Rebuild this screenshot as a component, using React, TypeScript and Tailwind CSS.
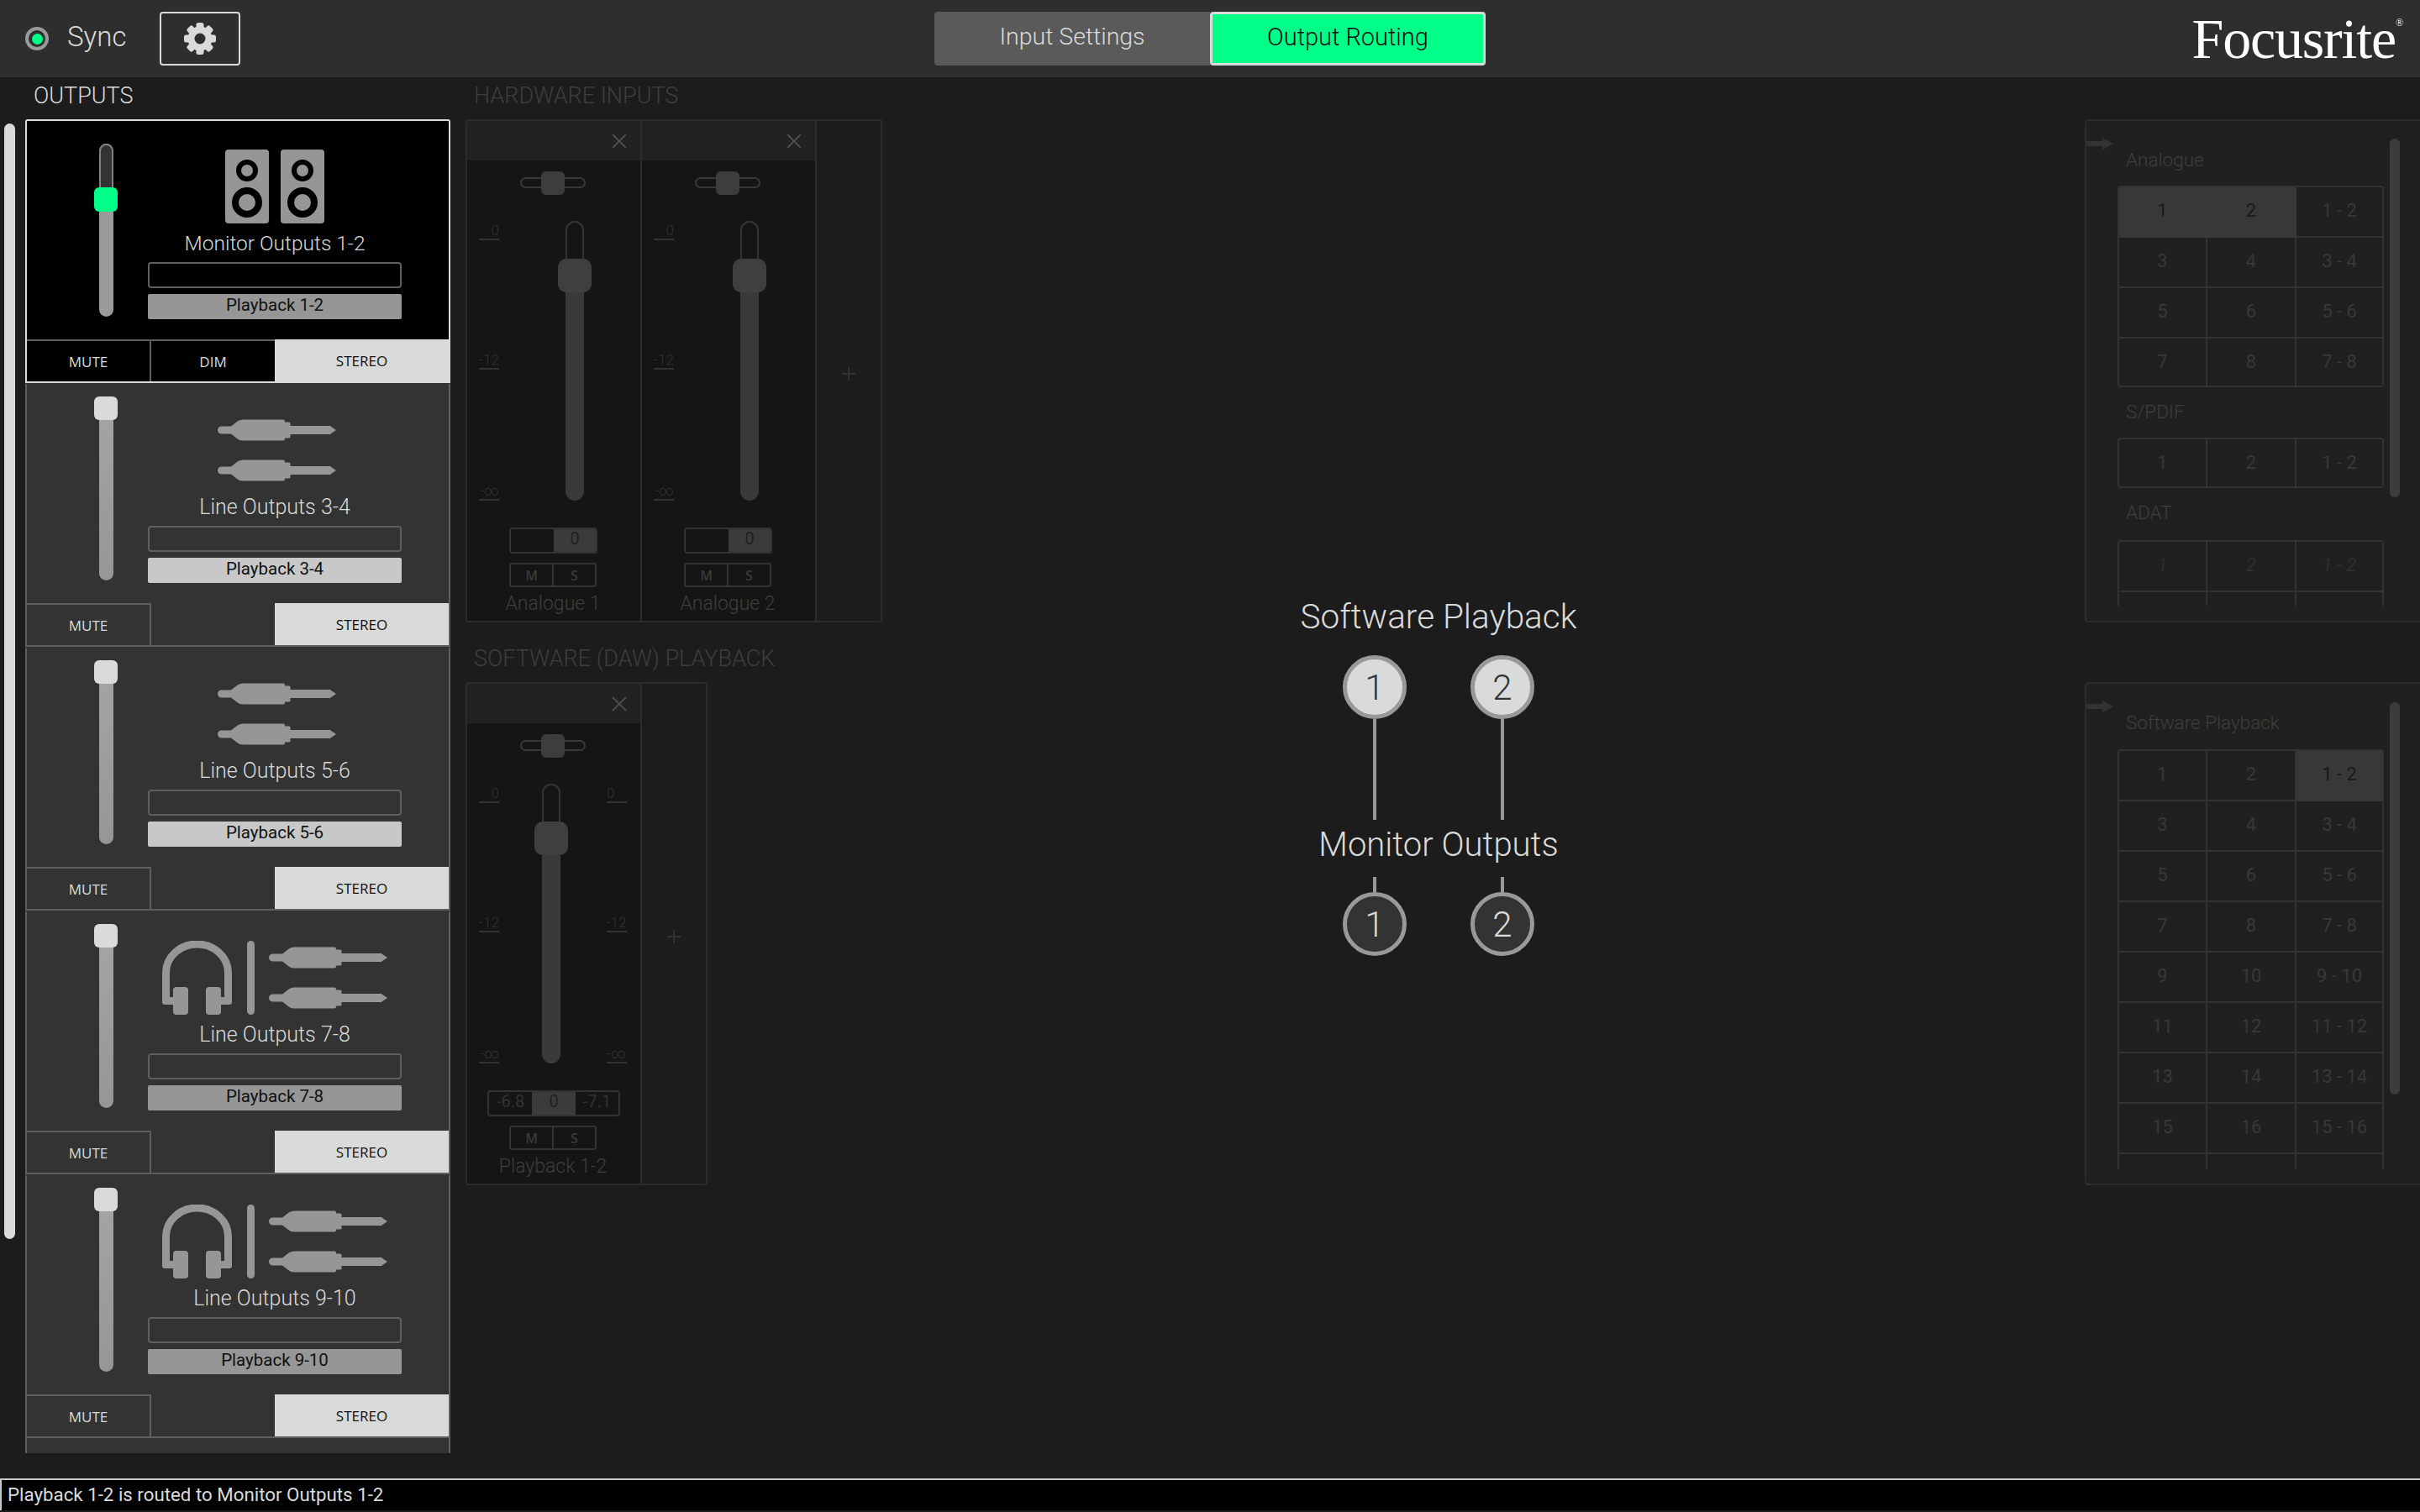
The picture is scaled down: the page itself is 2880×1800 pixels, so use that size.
import React from "react";

const GEAR_TEETH = [0, 45, 90, 135, 180, 225, 270, 315];

function Gear() {
  return (
    <svg width="38" height="40" viewBox="0 0 38 40">
      {GEAR_TEETH.map((a) => (
        <rect key={a} x="14.5" y="1" width="9" height="10" rx="2.5" fill="#d9dbda" transform={`rotate(${a} 19 20)`} />
      ))}
      <circle cx="19" cy="20" r="10.5" fill="none" stroke="#d9dbda" strokeWidth="8" />
    </svg>
  );
}

function Speaker() {
  return (
    <svg width="52" height="88" viewBox="0 0 52 88">
      <rect width="52" height="88" rx="4" fill="#969696" />
      <circle cx="26" cy="25" r="10" fill="#969696" stroke="#000" strokeWidth="6" />
      <circle cx="26" cy="63" r="14" fill="#969696" stroke="#000" strokeWidth="8" />
    </svg>
  );
}

function Jack() {
  return (
    <svg width="141" height="26" viewBox="0 0 141 26" className="block">
      <path
        fill="#969696"
        d="M4.5 8.5 H16 L23 3 Q26 0.5 30 0.5 H78 Q80 0.5 80 2.5 V3.5 H85 Q86.5 3.5 86.5 5 V8 H133 V7.5 L141 13 L133 18.5 V18 H86.5 V21 Q86.5 22.5 85 22.5 H80 V23.5 Q80 25.5 78 25.5 H30 Q26 25.5 23 23 L16 17.5 H4.5 A4.5 4.5 0 0 1 4.5 8.5 Z"
      />
    </svg>
  );
}

function Headphones() {
  return (
    <svg width="83" height="88" viewBox="0 0 83 88">
      <path d="M4.5 72 V38 A37 34 0 0 1 78.5 38 V72" fill="none" stroke="#969696" strokeWidth="9" />
      <rect x="0" y="67" width="16" height="9" rx="3" fill="#969696" />
      <rect x="67" y="67" width="16" height="9" rx="3" fill="#969696" />
      <rect x="13" y="55" width="18" height="33" rx="4" fill="#969696" />
      <rect x="52" y="55" width="18" height="33" rx="4" fill="#969696" />
    </svg>
  );
}

function Jacks() {
  return (
    <div className="flex flex-col gap-[22px]">
      <Jack />
      <Jack />
    </div>
  );
}

function OutputCard({ name, source, icon, bright, selected }: { name: string; source: string; icon: string; bright?: boolean; selected?: boolean }) {
  return (
    <div className={selected ? "h-[314px] bg-black border-t-2 border-x-2 border-[#d9dbda] rounded-t-[3px]" : "h-[314px] bg-[#333333] border-x-2 border-t-2 border-x-[#5f5f5f] border-t-[#333333]"}>
      <div className="flex h-[260px]">
        <div className="relative w-[28px] h-[206px] ml-[80px] mt-[27px]">
          {selected ? (
            <div className="w-[17px] h-full mx-auto rounded-full bg-[#9a9a9a] overflow-hidden">
              <div className="h-[56px] bg-[#333333] border-2 border-b-0 border-[#808080] rounded-t-full" />
            </div>
          ) : (
            <div className="w-[17px] h-full mx-auto rounded-full bg-gradient-to-b from-[#a4a4a4] to-[#969696]" />
          )}
          {selected ? (
            <div className="absolute left-0 top-[52px] w-[28px] h-[29px] rounded-[6px] bg-[#00ff88]" />
          ) : (
            <div className="absolute left-0 -top-[13px] w-[28px] h-[28px] rounded-[6px] bg-[#d9dbda]" />
          )}
        </div>
        <div className="flex flex-col w-[302px] ml-[36px]">
          <div className="h-[131px] pt-[25px] flex items-center justify-center shrink-0">
            {icon === "speakers" && (
              <div className="flex gap-[14px]">
                <Speaker />
                <Speaker />
              </div>
            )}
            {icon === "jacks" && (
              <div className="ml-[5px]">
                <Jacks />
              </div>
            )}
            {icon === "phones" && (
              <div className="flex items-center">
                <Headphones />
                <div className="w-[9px] h-[88px] rounded-full bg-[#969696] ml-[18px] mr-[17px]" />
                <Jacks />
              </div>
            )}
          </div>
          <div className={selected ? "h-[28px] leading-[30px] text-[24.5px] text-center text-[#d9dbda]" : "h-[28px] leading-[30px] text-[25px] text-center text-[#d9dbda]"}>{name}</div>
          <div className="h-[31px] mt-[9px] border-2 border-[#5f5f5f] rounded-[4px]" />
          <div className={bright ? "h-[30px] mt-[7px] rounded-[2px] bg-[#c8c8c8] text-[#111111] font-normal text-[20.5px] leading-[26px] text-center" : "h-[30px] mt-[7px] rounded-[2px] bg-[#969696] text-[#111111] font-normal text-[20.5px] leading-[26px] text-center"}>{source}</div>
        </div>
      </div>
      <div className={selected ? "flex h-[52px] font-['Open_Sans',sans-serif] font-medium text-[17px] text-[#d9dbda] border-b-2 border-[#d9dbda]" : "flex h-[52px] font-['Open_Sans',sans-serif] font-medium text-[17px] text-[#d9dbda] border-b-2 border-[#5f5f5f]"}>
        <div className="w-[148px] pt-[2px] border-t-2 border-r-2 border-[#5f5f5f] flex items-center justify-center">MUTE</div>
        <div className={selected ? "w-[147px] pt-[2px] border-t-2 border-[#5f5f5f] flex items-center justify-center" : "w-[147px] flex items-center justify-center"}>{selected ? "DIM" : ""}</div>
        <div className="flex-1 pt-[2px] bg-[#d9dbda] text-[#111111] flex items-center justify-center">STEREO</div>
      </div>
    </div>
  );
}

function Scale({ right }: { right?: boolean }) {
  return (
    <div className="w-[24px] flex flex-col">
      <div className={right ? "h-[23px] flex items-end justify-start border-b-2 border-[#333333] text-[17px] leading-[20px] text-[#333333]" : "h-[23px] flex items-end justify-end border-b-2 border-[#333333] text-[17px] leading-[20px] text-[#333333]"}>0</div>
      <div className={right ? "h-[154px] flex items-end justify-start border-b-2 border-[#333333] text-[17px] leading-[20px] text-[#333333]" : "h-[154px] flex items-end justify-end border-b-2 border-[#333333] text-[17px] leading-[20px] text-[#333333]"}>-12</div>
      <div className={right ? "h-[156px] flex items-end justify-start border-b-2 border-[#333333] text-[17px] leading-[20px] text-[#333333]" : "h-[156px] flex items-end justify-end border-b-2 border-[#333333] text-[17px] leading-[20px] text-[#333333]"}>-∞</div>
    </div>
  );
}

function Strip({ label, stereo }: { label: string; stereo?: boolean }) {
  return (
    <div className="w-[208px] h-full bg-[#151515] border-r-2 border-[#2c2c2c] shrink-0">
      <div className="h-[47px] bg-[#222222] flex items-center justify-end pr-[15px]">
        <svg width="20" height="20" viewBox="0 0 20 20">
          <path d="M2 2 L18 18 M18 2 L2 18" stroke="#4d4d4d" strokeWidth="1.8" />
        </svg>
      </div>
      <div className="relative w-[78px] h-[13px] ml-[63px] mt-[20px] border-2 border-[#383838] rounded-full">
        <div className="absolute left-[23px] -top-[9px] w-[28px] h-[28px] rounded-[6px] bg-[#3d3d3d]" />
      </div>
      <div className="flex h-[333px] mt-[39px] pl-[14px]">
        <Scale />
        <div className={stereo ? "relative w-[40px] h-full ml-[42px]" : "relative w-[40px] h-full ml-[70px]"}>
          <div className="w-[22px] h-full mx-auto rounded-full bg-[#3a3a3a] overflow-hidden">
            <div className="h-[50px] bg-[#151515] border-2 border-b-0 border-[#333333] rounded-t-full" />
          </div>
          <div className="absolute left-0 top-[45px] w-[40px] h-[40px] rounded-[10px] bg-[#3f3f3f]" />
        </div>
        {stereo && (
          <div className="ml-[46px]">
            <Scale right />
          </div>
        )}
      </div>
      {stereo ? (
        <div className="flex w-[158px] h-[31px] ml-[24px] mt-[32px] border-2 border-[#333333] rounded-[4px] font-normal text-[20px] leading-[22px] text-[#333333] text-center overflow-hidden">
          <div className="w-[51px]">-6.8</div>
          <div className="w-[52px] bg-[#3b3b3b] text-[#222222]">0</div>
          <div className="flex-1">-7.1</div>
        </div>
      ) : (
        <div className="flex w-[105px] h-[31px] ml-[50px] mt-[32px] border-2 border-[#333333] rounded-[4px] font-normal text-[20px] leading-[22px] text-center overflow-hidden">
          <div className="w-[51px]" />
          <div className="flex-1 bg-[#3b3b3b] text-[#222222]">0</div>
        </div>
      )}
      <div className="flex w-[104px] h-[29px] ml-[50px] mt-[11px] border-2 border-[#333333] rounded-[3px] font-['Open_Sans',sans-serif] font-semibold text-[16px] text-[#3a3a3a]">
        <div className="w-[51px] border-r-2 border-[#333333] flex items-center justify-center">M</div>
        <div className="flex-1 flex items-center justify-center">S</div>
      </div>
      <div className="w-[204px] mt-[6px] h-[28px] leading-[28px] text-[23px] text-center text-[#3e3e3e]">{label}</div>
    </div>
  );
}

function AddColumn() {
  return (
    <div className="flex-1 h-full flex items-center justify-center pt-[6px]">
      <svg width="16" height="16" viewBox="0 0 16 16">
        <path d="M8 0 V16 M0 8 H16" stroke="#333333" strokeWidth="2" />
      </svg>
    </div>
  );
}

function SectionTitle({ children }: { children: React.ReactNode }) {
  return <div className="h-[50px] pt-[7px] pl-[10px] text-[27px] leading-[30px] text-[#3e3e3e]">{children}</div>;
}

function Circle({ n, on }: { n: string; on?: boolean }) {
  return (
    <div className={on ? "w-[76px] h-[76px] rounded-full border-[5px] border-[#999999] bg-[#d9dbda] text-[#333333] text-[42px] flex items-center justify-center" : "w-[76px] h-[76px] rounded-full border-[5px] border-[#999999] bg-[#333333] text-[#d9dbda] text-[42px] flex items-center justify-center"}>
      {n}
    </div>
  );
}

function Cell({ t, on, edge, italic }: { t: string; on?: boolean; edge?: boolean; italic?: boolean }) {
  const base = "h-[60px] pb-[4px] flex items-center justify-center text-[22px] font-normal ";
  const bg = on ? "bg-[#383838] text-[#1a1a1a] border-b-2 border-[#383838] " : italic ? "text-[#2e2e2e] italic border-b-2 border-[#333333] " : "text-[#383838] border-b-2 border-[#333333] ";
  const right = edge ? "" : on ? "border-r-2 border-r-[#383838]" : "border-r-2 border-r-[#333333]";
  return <div className={base + bg + right}>{t}</div>;
}

function Table({ rows, on, h, open, italic }: { rows: string[][]; on?: string[]; h?: string; open?: boolean; italic?: boolean }) {
  return (
    <div className={`${open ? "border-x-2 border-t-2 rounded-t-[4px]" : "border-2 rounded-[4px]"} ${h ?? ""} border-[#333333] overflow-hidden grid grid-cols-[105px_106px_1fr]`}>
      {rows.map((r, i) =>
        r.map((t, j) => <Cell key={i + "-" + j} t={t} on={i === 0 && !!on && on.includes(t)} edge={j === 2} italic={italic} />)
      )}
    </div>
  );
}

function Arrow() {
  return (
    <svg width="32" height="14" viewBox="0 0 32 14" className="block">
      <path d="M0 4 H19 V0 L32 7 L19 14 V10 H0 Z" fill="#333333" />
    </svg>
  );
}

const outputs = [
  { name: "Monitor Outputs 1-2", source: "Playback 1-2", icon: "speakers", selected: true },
  { name: "Line Outputs 3-4", source: "Playback 3-4", icon: "jacks", bright: true },
  { name: "Line Outputs 5-6", source: "Playback 5-6", icon: "jacks", bright: true },
  { name: "Line Outputs 7-8", source: "Playback 7-8", icon: "phones" },
  { name: "Line Outputs 9-10", source: "Playback 9-10", icon: "phones" },
];

const sw = [
  ["1", "2", "1 - 2"],
  ["3", "4", "3 - 4"],
  ["5", "6", "5 - 6"],
  ["7", "8", "7 - 8"],
  ["9", "10", "9 - 10"],
  ["11", "12", "11 - 12"],
  ["13", "14", "13 - 14"],
  ["15", "16", "15 - 16"],
  ["", "", ""],
];

export default function App() {
  return (
    <div className="w-[2880px] h-[1800px] overflow-hidden flex flex-col bg-[#1c1c1c] font-['Roboto',sans-serif] font-light">
      {/* Header */}
      <div className="h-[92px] shrink-0 bg-[#2e2e2e] flex items-center">
        <div className="ml-[30px] w-[28px] h-[28px] rounded-full border-4 border-[#9a9a9a] bg-[#2e2e2e] flex items-center justify-center">
          <div className="w-[13px] h-[13px] rounded-full bg-[#00ff88]" />
        </div>
        <div className="ml-[22px] w-[69px] pb-[4px] text-[33px] leading-[40px] text-[#d9dbda]">Sync</div>
        <div className="ml-[41px] w-[96px] h-[64px] border-2 border-[#d9dbda] rounded-[4px] flex items-center justify-center">
          <Gear />
        </div>
        <div className="ml-[826px] flex w-[656px] h-[64px]">
          <div className="w-[328px] bg-[#5a5a5a] rounded-l-[4px] text-[28.5px] text-[#d9dbda] flex items-center justify-center pb-[3px]">Input Settings</div>
          <div className="flex-1 bg-[#00ff88] border-[3px] border-[#d9dbda] rounded-[4px] text-[29px] text-[#111111] flex items-center justify-center pb-[3px]">Output Routing</div>
        </div>
        <div className="ml-auto mr-[20px] flex items-start text-white font-['Liberation_Serif',serif] font-normal">
          <span className="text-[68px] leading-[68px] tracking-[-1.2px]">Focusrite</span>
          <span className="text-[12px] leading-[14px] mt-[8px]">®</span>
        </div>
      </div>

      {/* Body */}
      <div className="h-[1668px] shrink-0 flex">
        <div className="w-[30px] shrink-0 pl-[5px] pt-[55px]">
          <div className="w-[13px] h-[1328px] rounded-full bg-[#d9dbda]" />
        </div>

        <div className="w-[506px] shrink-0">
          <div className="h-[50px] pt-[7px] pl-[10px] text-[27px] leading-[30px] text-[#d9dbda]">OUTPUTS</div>
          <div className="h-[1588px] overflow-hidden">
            {outputs.map((o) => (
              <OutputCard key={o.name} {...o} />
            ))}
            <div className="h-[40px] bg-[#333333] border-x-2 border-[#5f5f5f]" />
          </div>
        </div>

        <div className="w-[496px] ml-[18px] shrink-0">
          <SectionTitle>HARDWARE INPUTS</SectionTitle>
          <div className="w-[496px] h-[599px] flex border-2 border-[#2c2c2c] rounded-[3px]">
            <Strip label="Analogue 1" />
            <Strip label="Analogue 2" />
            <AddColumn />
          </div>
          <div className="mt-[21px]">
            <SectionTitle>SOFTWARE (DAW) PLAYBACK</SectionTitle>
            <div className="w-[288px] h-[599px] flex border-2 border-[#2c2c2c] rounded-[3px]">
              <Strip label="Playback 1-2" stereo />
              <AddColumn />
            </div>
          </div>
        </div>

        <div className="w-[1324px] shrink-0 pt-[617px] flex flex-col items-center text-[#d9dbda]">
          <div className="h-[48px] leading-[50px] text-[40.5px]">Software Playback</div>
          <div className="flex gap-[76px] mt-[23px]">
            <Circle n="1" on />
            <Circle n="2" on />
          </div>
          <div className="flex gap-[148px]">
            <div className="w-[4px] h-[120px] bg-[#999999]" />
            <div className="w-[4px] h-[120px] bg-[#999999]" />
          </div>
          <div className="h-[48px] leading-[50px] text-[40px] mt-[5px]">Monitor Outputs</div>
          <div className="flex gap-[148px] mt-[15px]">
            <div className="w-[4px] h-[18px] bg-[#999999]" />
            <div className="w-[4px] h-[18px] bg-[#999999]" />
          </div>
          <div className="flex gap-[76px]">
            <Circle n="1" />
            <Circle n="2" />
          </div>
        </div>

        <div className="flex-1 pl-[107px]">
          <div className="h-[50px]" />
          <div className="relative h-[599px] flex bg-[#202020] border-y-2 border-l-2 border-[#2c2c2c] rounded-l-[4px] text-[#3e3e3e] text-[22.5px]">
            <div className="absolute left-0 top-[20px]"><Arrow /></div>
            <div className="w-[317px] ml-[37px] h-[577px] overflow-hidden pt-[32px] shrink-0">
              <div className="h-[28px] leading-[28px] mb-[17px] pl-[10px]">Analogue</div>
              <Table h="h-[240px]" on={["1", "2"]} rows={[["1", "2", "1 - 2"], ["3", "4", "3 - 4"], ["5", "6", "5 - 6"], ["7", "8", "7 - 8"]]} />
              <div className="h-[28px] leading-[28px] mt-[15px] mb-[17px] pl-[10px]">S/PDIF</div>
              <Table h="h-[60px]" rows={[["1", "2", "1 - 2"]]} />
              <div className="h-[28px] leading-[28px] mt-[15px] mb-[19px] pl-[10px]">ADAT</div>
              <Table open italic rows={[["1", "2", "1 - 2"], ["", "", ""]]} />
            </div>
            <div className="w-[12px] h-[427px] mt-[21px] ml-[7px] rounded-full bg-[#3c3c3c]" />
          </div>
          <div className="h-[71px]" />
          <div className="relative h-[599px] flex bg-[#202020] border-y-2 border-l-2 border-[#2c2c2c] rounded-l-[4px] text-[#3e3e3e] text-[22.5px]">
            <div className="absolute left-0 top-[20px]"><Arrow /></div>
            <div className="w-[317px] ml-[37px] h-[578px] overflow-hidden pt-[32px] shrink-0">
              <div className="h-[28px] leading-[28px] mb-[18px] pl-[10px]">Software Playback</div>
              <Table open on={["1 - 2"]} rows={sw} />
            </div>
            <div className="w-[12px] h-[467px] mt-[22px] ml-[7px] rounded-full bg-[#3c3c3c]" />
          </div>
        </div>
      </div>

      {/* Status */}
      <div className="h-[38px] shrink-0 bg-black border-t-2 border-l-2 border-[#c8c8c8] pl-[7px] font-normal text-[22.3px] leading-[34px] text-[#d9dbda]">
        Playback 1-2 is routed to Monitor Outputs 1-2
      </div>
    </div>
  );
}
